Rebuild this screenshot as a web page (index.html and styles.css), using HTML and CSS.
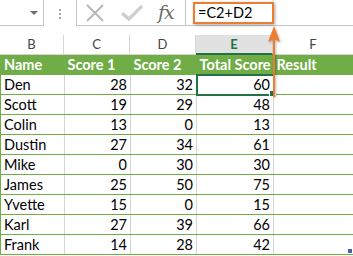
FILE: index.html
```html
<!DOCTYPE html>
<html>
<head>
<link rel="stylesheet" href="styles.css">
</head>
<body>

<div class="formulabar">
	<div class="namebox"><span class="caret"></span></div>
	<div class="grip"><i></i><i></i><i></i></div>
	<div class="fxbox">
		<svg class="icon" width="20" height="18" viewBox="0 0 20 18">
			<path d="M2 1 L18 17 M18 1 L2 17" stroke="#b8b8b8" stroke-width="2" fill="none"/>
		</svg>
		<svg class="icon" width="22" height="16" viewBox="0 0 22 16">
			<path d="M1 8 L8 14 L21 1" stroke="#cfcfcf" stroke-width="3.4" fill="none"/>
		</svg>
		<span class="fx">fx</span>
	</div>
	<div class="input">
		<span class="formula">=C2+D2</span>
	</div>
</div>

<div class="colheads">
	<div class="ch b">B</div>
	<div class="ch c">C</div>
	<div class="ch d">D</div>
	<div class="ch e active">E</div>
	<div class="ch f">F</div>
</div>

<table class="sheet">
	<colgroup>
		<col class="b"><col class="c"><col class="d"><col class="e"><col class="f">
	</colgroup>
	<tr class="head">
		<th>Name</th><th>Score 1</th><th>Score 2</th><th>Total Score</th><th>Result</th>
	</tr>
	<tr><td>Den</td><td class="num">28</td><td class="num">32</td><td class="num selected">60</td><td></td></tr>
	<tr><td>Scott</td><td class="num">19</td><td class="num">29</td><td class="num">48</td><td></td></tr>
	<tr><td>Colin</td><td class="num">13</td><td class="num">0</td><td class="num">13</td><td></td></tr>
	<tr><td>Dustin</td><td class="num">27</td><td class="num">34</td><td class="num">61</td><td></td></tr>
	<tr><td>Mike</td><td class="num">0</td><td class="num">30</td><td class="num">30</td><td></td></tr>
	<tr><td>James</td><td class="num">25</td><td class="num">50</td><td class="num">75</td><td></td></tr>
	<tr><td>Yvette</td><td class="num">15</td><td class="num">0</td><td class="num">15</td><td></td></tr>
	<tr><td>Karl</td><td class="num">27</td><td class="num">39</td><td class="num">66</td><td></td></tr>
	<tr><td>Frank</td><td class="num">14</td><td class="num">28</td><td class="num">42</td><td class="last"></td></tr>
</table>

<!-- callout arrow from the formula to the cell -->
<svg class="arrow" width="20" height="76" viewBox="0 0 20 76">
	<path d="M10 14 L10 72" stroke="#ed7d31" stroke-width="2"/>
	<path d="M10 1 L4 17 L10 14 L16 17 Z" fill="#ed7d31"/>
</svg>

</body>
</html>
```

FILE: styles.css
```css
body {
	margin: 0;
	background: #ffffff;
	font-family: Lato, "Liberation Sans", sans-serif;
	font-size: 14px;
	color: #000000;
	width: 353px;
	height: 256px;
	overflow: hidden;
	position: relative;
}

.formulabar {
	display: flex;
	height: 26px;
}

.namebox {
	width: 43px;
	border-right: 1px solid #c6c6c6;
	border-bottom: 1px solid #c6c6c6;
	position: relative;
}

.caret {
	position: absolute;
	left: 30px;
	top: 11px;
	border-left: 4px solid transparent;
	border-right: 4px solid transparent;
	border-top: 4px solid #6d6d6d;
}

.grip {
	width: 32px;
	display: flex;
	flex-direction: column;
	align-items: center;
	gap: 2px;
	padding-top: 9px;
}

.grip i {
	width: 2px;
	height: 2px;
	background: #a6a6a6;
}

.fxbox {
	width: 100px;
	border: 1px solid #c6c6c6;
	border-top: none;
	display: flex;
	align-items: center;
	padding-left: 8px;
	gap: 16px;
}

.fxbox .icon {
	display: block;
}

.fx {
	font-family: "DejaVu Serif", serif;
	font-style: italic;
	font-size: 19px;
	color: #6b6b6b;
	margin-left: -1px;
	letter-spacing: -1px;
	padding-bottom: 2px;
}

.input {
	flex: 1;
	border-bottom: 1px solid #c6c6c6;
	padding: 2px 0 0 7px;
}

.formula {
	display: block;
	width: 74px;
	height: 18px;
	line-height: 18px;
	padding-left: 3px;
	border: 2px solid #ed7d31;
	box-shadow: 1px 1px 3px rgba(0, 0, 0, 0.35);
	font-size: 14.5px;
}

.colheads {
	display: grid;
	grid-template-columns: 64px 66px 66px 77px 80px;
	margin-top: 9px;
	height: 20px;
}

.ch {
	text-align: center;
	font-size: 13px;
	color: #444444;
	line-height: 19px;
	border-right: 1px solid #d6d6d6;
	border-bottom: 1px solid #d6d6d6;
}

.ch.f {
	border-right: none;
}

.ch.active {
	background: #e1e1e1;
	color: #217346;
	font-weight: bold;
	border-bottom: 2px solid #217346;
	line-height: 18px;
}

.sheet {
	border-collapse: collapse;
	table-layout: fixed;
	width: 353px;
	border-left: 1px solid #70ad47;
	border-right: 1px solid #70ad47;
}

col.b { width: 64px; }
col.c { width: 66px; }
col.d { width: 66px; }
col.e { width: 77px; }
col.f { width: 80px; }

.sheet th, .sheet td {
	height: 19px;
	padding: 0 3px;
	white-space: nowrap;
	overflow: hidden;
}

.sheet td {
	border-right: 1px solid #d4d4d4;
	border-bottom: 1px solid #70ad47;
	font-size: 14.5px;
}

.sheet td:last-child {
	border-right: 1px solid #70ad47;
}

.sheet th {
	background: #70ad47;
	color: #ffffff;
	font-weight: bold;
	text-align: left;
	border-bottom: 1px solid #70ad47;
	font-size: 14.5px;
}

.sheet td.num {
	text-align: right;
}

.sheet td.selected {
	outline: 2px solid #217346;
	outline-offset: -1px;
	position: relative;
	overflow: visible;
}

.sheet td.selected::after {
	content: "";
	position: absolute;
	right: -3px;
	bottom: -3px;
	width: 5px;
	height: 5px;
	background: #217346;
	border: 1px solid #ffffff;
}

.sheet td.last {
	position: relative;
}

.sheet td.last::after {
	content: "";
	position: absolute;
	right: 1px;
	bottom: 1px;
	width: 4px;
	height: 4px;
	background: #4a5fae;
}

.arrow {
	position: absolute;
	left: 264px;
	top: 25px;
	filter: drop-shadow(1px 1px 1px rgba(0, 0, 0, 0.3));
}
```
